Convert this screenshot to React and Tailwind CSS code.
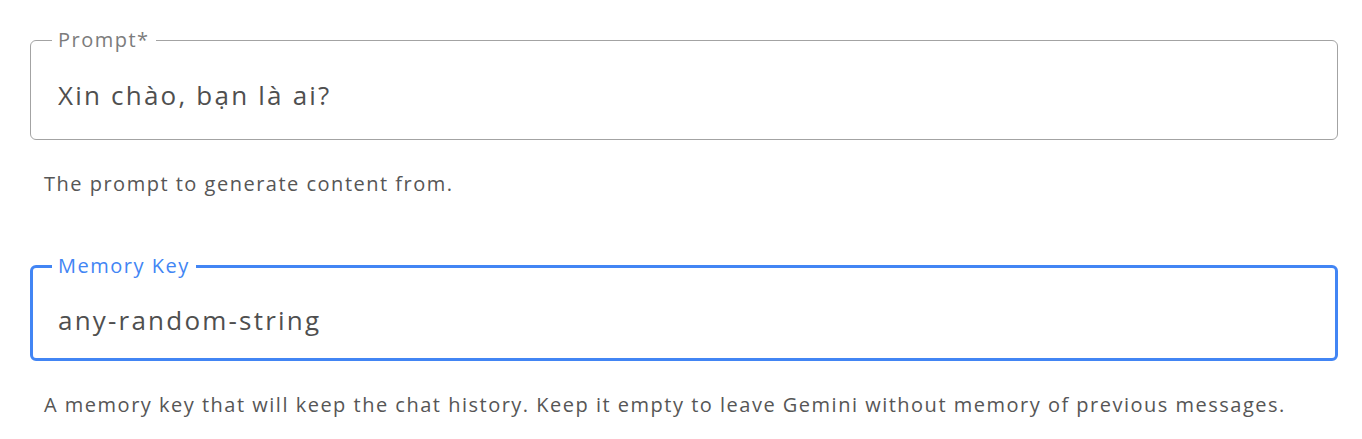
import React from 'react'

// Outlined text field with notched label (fieldset + legend)
function Field({ label, value, helper, focused }) {
  return (
    <div className="mb-[58px]">
      <fieldset
        className={
          focused
            ? 'rounded-[6px] border-[3px] border-[#4285f4] px-[25px] pb-[18px]'
            : 'rounded-[6px] border border-[#a3a3a3] px-[27px] pb-[24px]'
        }
      >
        <legend
          className={
            focused
              ? 'ml-[-6px] px-[6px] text-[20px] leading-[24px] tracking-[0.075em] text-[#4285f4]'
              : 'ml-[-6px] px-[6px] text-[20px] leading-[24px] tracking-[0.075em] text-[#7c7c7c]'
          }
        >
          {label}
        </legend>
        <input
          readOnly
          value={value}
          className={
            focused
              ? 'mt-[22px] block w-full bg-transparent text-[26px] leading-[40px] tracking-[0.085em] text-[#4f4f4f] outline-none'
              : 'mt-[23px] block w-full bg-transparent text-[26px] leading-[40px] tracking-[0.085em] text-[#4f4f4f] outline-none'
          }
        />
      </fieldset>
      <p className="mt-[32px] pl-[14px] text-[20px] leading-[24px] tracking-[0.075em] text-[#565656]">{helper}</p>
    </div>
  )
}

export default function App() {
  return (
    <div
      className="min-h-screen bg-white pt-[28px] pl-[30px] pr-[24px]"
      style={{ fontFamily: '"Open Sans", "Noto Sans", sans-serif' }}
    >
      <Field label="Prompt*" value="Xin chào, bạn là ai?" helper="The prompt to generate content from." />
      <Field
        focused
        label="Memory Key"
        value="any-random-string"
        helper="A memory key that will keep the chat history. Keep it empty to leave Gemini without memory of previous messages."
      />
    </div>
  )
}
